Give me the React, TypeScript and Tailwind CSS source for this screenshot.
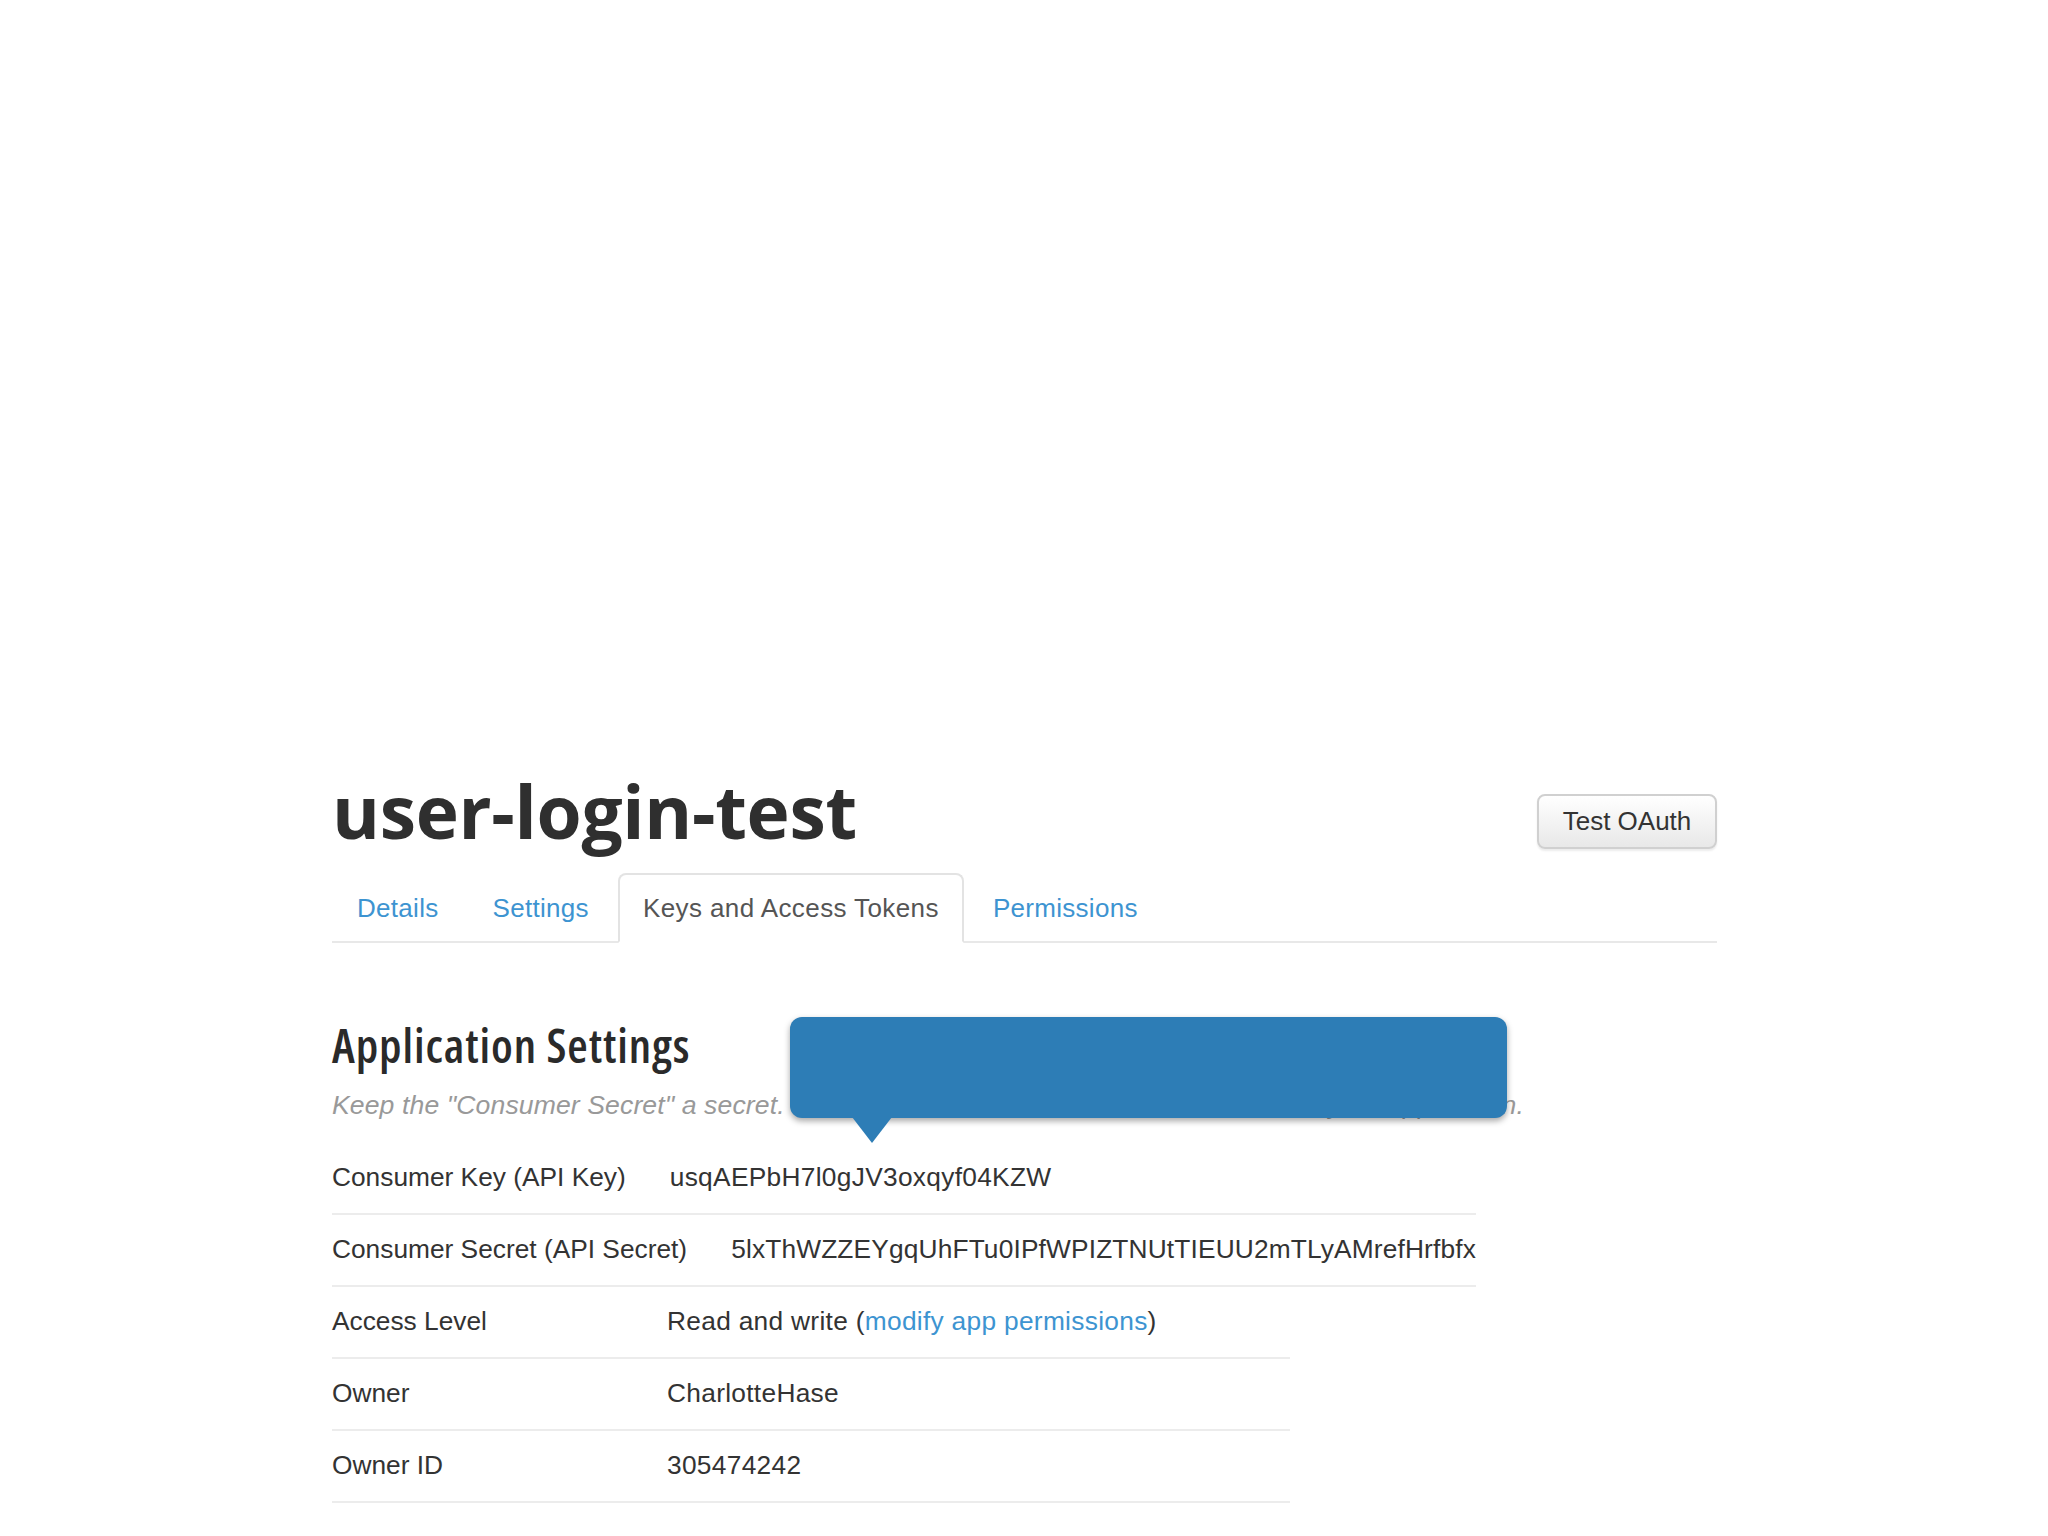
import React from 'react';

interface Row {
  label: string;
  value: React.ReactNode;
  wide?: boolean;
}

const rows: Row[] = [
  { label: 'Consumer Key (API Key)', value: 'usqAEPbH7l0gJV3oxqyf04KZW' },
  { label: 'Consumer Secret (API Secret)', value: '5lxThWZZEYgqUhFTu0IPfWPIZTNUtTIEUU2mTLyAMrefHrfbfx', wide: true },
  {
    label: 'Access Level',
    value: (
      <>
        Read and write (<a className="text-[#3d94d1]">modify app permissions</a>)
      </>
    ),
  },
  { label: 'Owner', value: 'CharlotteHase' },
  { label: 'Owner ID', value: '305474242' },
];

const tabs = ['Details', 'Settings', 'Keys and Access Tokens', 'Permissions'];

const App: React.FC = () => {
  return (
    <div className="min-h-screen bg-white font-['Liberation_Sans',Arial,sans-serif] text-[#333]">
      <div className="relative ml-[332px] w-[1385px] pt-[774px] pb-[40px]">
        <div className="flex items-start justify-between">
          <h1 className="font-['Open_Sans',sans-serif] text-[73px] font-bold leading-[73px] tracking-[-0.3px] text-[#2f2f2f]">
            user-login-test
          </h1>
          <button className="mt-[20px] h-[55px] w-[180px] rounded-[8px] border-2 border-[#d0d0d0] bg-gradient-to-b from-white to-[#e8e8e8] text-[26px] text-[#333] shadow-[0_2px_2px_rgba(0,0,0,0.08)]">
            Test OAuth
          </button>
        </div>

        <nav className="mt-[24px] flex border-b-2 border-[#e8e8e8]">
          {tabs.map((t, i) => {
            const active = i === 2;
            return (
              <div
                key={t}
                className={
                  active
                    ? '-mb-[2px] mr-[4px] flex h-[70px] items-center rounded-t-[8px] border-2 border-[#e3e3e3] border-b-white bg-white px-[23px] text-[26px] tracking-[0.4px] text-[#555]'
                    : '-mb-[2px] mr-[4px] flex h-[70px] items-center border-2 border-transparent px-[23px] text-[26px] tracking-[0.3px] text-[#3d94d1]'
                }
              >
                {t}
              </div>
            );
          })}
        </nav>

        <h2 className="mt-[79px] font-['Open_Sans',sans-serif] font-stretch-condensed text-[47px] font-semibold leading-[46px] tracking-[0.9px] text-[#2a2a2a]">
          Application Settings
        </h2>
        <p className="mt-[24px] text-[26.6px] italic leading-[26px] tracking-[0.1px] text-[#999]">
          Keep the "Consumer Secret" a secret. This key should never be human-readable in your application.
        </p>

        <div className="mt-[25px] flex flex-col">
          {rows.map((r) => (
            <div
              key={r.label}
              className={
                r.wide
                  ? '-mt-[2px] flex h-[74px] w-max min-w-[958px] items-center border-y-2 border-[#ececec] text-[26.3px] whitespace-nowrap'
                  : 'flex h-[72px] w-max min-w-[958px] items-center border-b-2 border-[#ececec] text-[26.3px] whitespace-nowrap'
              }
            >
              <div className="min-w-[335px] shrink-0 pr-[44px]">{r.label}</div>
              <div className={r.wide ? 'tracking-[0.15px]' : 'tracking-[0.3px]'}>{r.value}</div>
            </div>
          ))}
        </div>

        <div className="absolute left-[458px] top-[1017px] h-[101px] w-[717px] rounded-[12px] bg-[#2d7db6] shadow-[0_3px_6px_rgba(0,0,0,0.35)]">
          <div className="absolute left-[62px] top-[100px] h-0 w-0 border-x-[20px] border-t-[26px] border-x-transparent border-t-[#2d7db6]" />
        </div>
      </div>
    </div>
  );
};

export default App;
